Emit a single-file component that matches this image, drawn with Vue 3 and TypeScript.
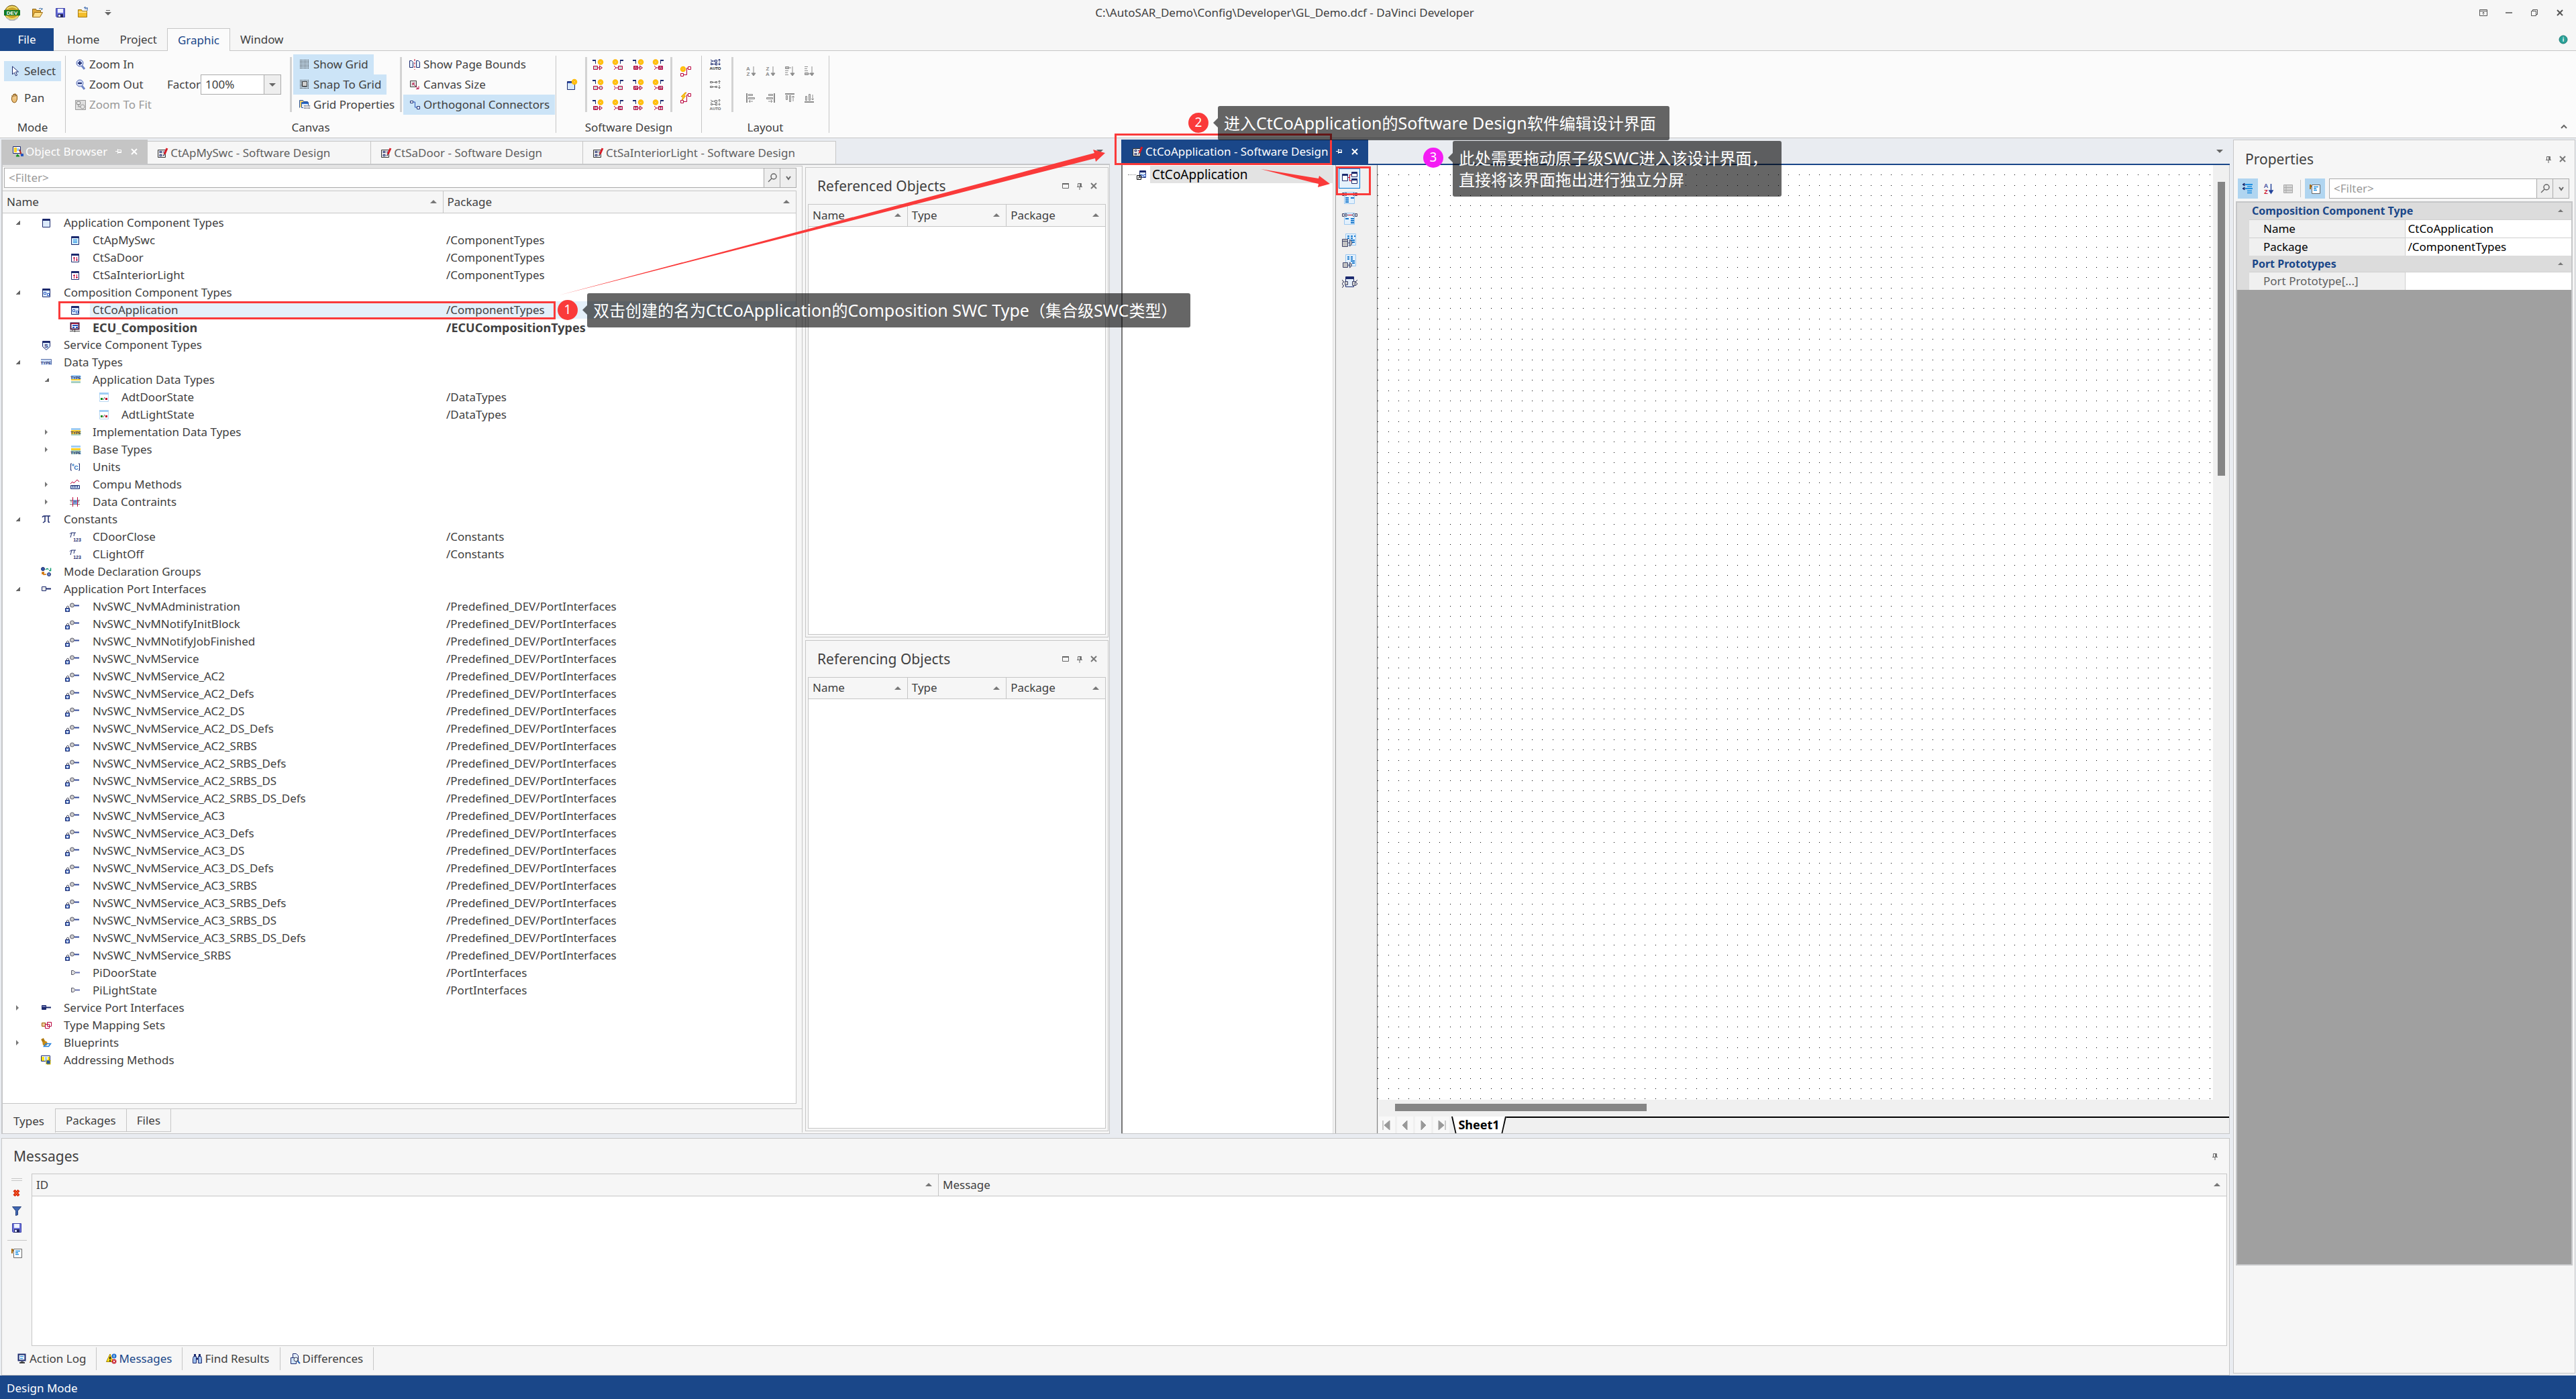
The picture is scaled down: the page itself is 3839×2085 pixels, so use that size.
<script setup lang="ts">
import { h } from 'vue'

const NAVY = '#1c2a6e'
const RED = '#b8003c'
const GREY = '#8c8c8c'

const r = (x: number, y: number, w: number, ht: number, fill: string) =>
  `<rect x="${x}" y="${y}" width="${w}" height="${ht}" fill="${fill}"/>`
const p = (d: string, stroke: string, fill = 'none', w = 1) =>
  `<path d="${d}" stroke="${stroke}" fill="${fill}" stroke-width="${w}"/>`
const t = (x: number, y: number, s: string, fill: string, size = 7) =>
  `<text x="${x}" y="${y}" font-size="${size}" font-weight="700" font-family="Liberation Sans, sans-serif" text-anchor="middle" fill="${fill}">${s}</text>`
const c = (x: number, y: number, rad: number, fill: string, stroke = 'none', w = 1) =>
  `<circle cx="${x}" cy="${y}" r="${rad}" fill="${fill}" stroke="${stroke}" stroke-width="${w}"/>`

const sun = (x: number, y: number) =>
  c(x, y, 3.5, '#ffe21a', '#ffb400', 1.5) + c(x, y, 1.5, '#ffef80', '#ff9000')
const win = (inner = '', body = '#dcebfb') =>
  p('M2.500 2.500h11v12h-11z', NAVY, body) + r(3, 3, 10, 2, NAVY) + inner

const outPort = (letter: string, head: string) =>
  r(0, 1, 5, 2, NAVY) + r(4, 3, 1, 4, NAVY) + sun(12, 4.5) +
  p('M1.500 10.500h6v5h-6z', RED, '#d0d0d0') + p('M7 13h3', RED) +
  (head === 'o' ? c(12.5, 13, 2.5, '#ccc', RED) : p('M10.500 10l4 3-4 3z', RED, '#d0d0d0')) +
  (letter ? t(4.5, 15, letter, RED, 6) : '')
const inPort = (letter: string, tail: string) =>
  sun(4, 4.5) + r(11, 1, 5, 2, NAVY) + r(11, 3, 1, 4, NAVY) +
  p('M8.500 10.500h6v5h-6z', RED, '#d0d0d0') +
  (tail === 'o' ? p('M2 10q4 3 0 6M5 13h3', RED) : p('M2 10l3 3-3 3M5 13h3', RED)) +
  (letter ? t(11.5, 15, letter, RED, 6) : '')

const bars = (mark: number) => {
  const col = ['#9fcdf4', '#ffd028', '#a5cfc0']
  return r(2, 2, 14, 3, col[0]) + r(2, 6, 14, 3, col[1]) + r(2, 10, 14, 3, col[2]) +
    r(2, 1 + mark * 4, 14, 6, col[mark]) + t(9, 7 + mark * 4, 'TYPE', NAVY, 6)
}
const floppy =
  p('M1.500 1.500h13v13h-12l-1-1z', '#3a3fa8', '#6a70d8') + r(4, 2, 8, 6, '#eef2ff') +
  r(4, 10, 8, 5, '#22265e') + r(5, 11, 3, 3, '#dfe3ff')
const arrowDown = (x: number) => p(`M${x} 1v13M${x - 3} 11l3 4 3-4z`, GREY, GREY)
const doc = (x: number, lines: string) =>
  p(`M${x}.500 1.500h15v17h-15z`, '#9cc8f0', '#e2f0fc') + p(lines, '#1677cc', 'none', 2)
const linkTop =
  p('M1.500 2.500h3v4h-3zM6.500 2l3 2.500-3 2.500zM20.500 2.500h3v4h-3zM19 2l-3 2.500 3 2.500', '#404468', '#ddd') +
  r(10, 4, 6, 1, '#d00020')

const icons: Record<string, string> = {
  app: c(12, 12, 11, '#c9a227', '#6a5410') + p('M4 6q8-6 16 0M3 17q9 8 18 0', '#f2da6a', 'none', 2) +
    r(0, 8, 24, 8, '#117a23') + t(12, 15, 'DEV', '#fff', 8) + p('M5 20l4 3h6l5-3', '#bbb', 'none', 2),
  open: p('M.500 14V2.500h5l1 2h6V7', '#8a6414', '#e0a83a') + p('M.500 14.500l3-7h12l-4 7z', '#9c6b10', '#ffdf8a') + p('M10 2q3-2 5 1l-2 0M15 3v-2', '#3b6ea8'),
  save: floppy,
  up: p('M.500 14.500v-11h5l1 2h7v9z', '#a5790f', '#f3bd2c') + r(1, 6, 12, 2, '#ffe38c') + p('M11 1h3v4M11 3V-1l-2 2M13 1l2 0', '#2f5fa8'),
  cursor: p('M3.500 1v12l3-3 2 5 2-1-2-5h4z', NAVY, '#fff'),
  hand: p('M3.500 9V4M5.500 8V2M7.500 8V1.500M9.500 8V3', '#8a5a16', 'none', 2) + p('M2.500 7v4q1 4 4 4t4-5V5', '#8a5a16', '#ecc07a') + p('M4.500 9V4M6.500 9V3M8.500 9V4', '#f2d09a'),
  zin: p('M10 10l4 5', '#6f86c8', 'none', 3) + c(7, 6, 5, '#cfd9f4', '#5b70b8') + p('M4 6h6M7 3v6', NAVY, 'none', 2),
  zout: p('M10 10l4 5', '#6f86c8', 'none', 3) + c(7, 6, 5, '#cfd9f4', '#5b70b8') + p('M4 6h6', NAVY, 'none', 2),
  fit: p('M.500 1.500h15v14h-15z', '#999', '#dedede') + p('M2.500 3.500h5v4h-5z', '#888', '#eee') + c(11, 11, 3, '#e6e6e6', '#999') + p('M5 8v3h3', '#888'),
  grid: [1, 3, 5, 7, 9, 11, 13].map(y => `<path d="M1 ${y}.500h14" stroke="#222" stroke-dasharray="1 1"/>`).join(''),
  snap: [1, 3, 5, 7, 9, 11, 13].map(y => `<path d="M1 ${y}.500h14" stroke="#222" stroke-dasharray="1 1"/>`).join('') + p('M4.500 3.500h7v7h-7z', '#333', '#cfcfcf'),
  gprops: p('M.500 12.500v-11h5l1 2h6v3', '#28549c', '#f6d36c') + p('M3.500 4.500h10v8h-10z', '#28549c', '#eaf3fd') + r(4, 5, 9, 2, '#2f6fd0') + r(6, 9, 10, 6, '#fff') + [9, 11, 13].map(y => `<path d="M7 ${y}.500h9" stroke="#223" stroke-dasharray="1 1"/>`).join(''),
  bounds: p('M.500 2.500h3l2 2v8h-5zM10.500 2.500h3l2 2v8h-5z', NAVY, '#e6f0fb') + `<path d="M8 0v16" stroke="#c00020" stroke-dasharray="3 2"/>`,
  csize: p('M1.500 2.500h9v9h-9z', '#444', '#ddd') + p('M5 6l8 8M5 9V6h3M10 14.500h4v-4', RED),
  ortho: p('M1.500 2.500h4v3h-4zM11.500 10.500h4v4h-4z', NAVY, '#fff') + p('M5 4h3.500v8h3', '#2451b8'),
  newc: p('M1.500 3.500h11v12h-11z', NAVY, '#d6e8fa') + r(2, 4, 8, 2, '#2d4ba8') + sun(12, 4),
  conn: sun(4, 5) + p('M11.500 1.500h4v4h-4zM.500 11.500h4v4h-4z', RED, '#fff') + p('M5 13.500h4.500v-10h2', RED),
  flash: p('M7 0L1 6h3l-2 6 6-7H5l4-5z', '#e89a00', '#ffd21c') + p('M11.500 1.500h4v4h-4zM.500 11.500h4v4h-4z', RED, '#fff') + p('M5 13.500h4.500v-10h2', RED),
  auto1: p('M1 1l3 2-3 2M4 3h3M7.500 1.500h3v3h-3zM1.500 6.500h2v2h-2zM4 7.500h4M8.500 6h2v3h-2zM14 0v4M12.500 2L14 0l1.500 2M14 5v4M12.500 7L14 9l1.500-2', NAVY) + t(8, 16, 'AUTO', '#111', 6),
  auto2: p('M.500 3.500h3v2h-3zM4 4.500h4M8.500 3.500h2v2h-2zM.500 10.500h3v2h-3zM4 11.500h4M8.500 10.500h2v2h-2zM14 2v5M12.500 4L14 2l1.500 2M14 9v5M12.500 12l1.500 2 1.500-2', '#666'),
  auto3: p('M1 1l3 2-3 2M4 3h3M7.500 1.500h3v3h-3zM1.500 6.500h2v2h-2zM4 7.500h4M8.500 6h2v3h-2zM14 0v4M12.500 2L14 0l1.500 2M14 5v4M12.500 7L14 9l1.500-2', '#777') + t(8, 16, 'AUTO', '#666', 6),
  l0: t(4, 7, 'A', GREY, 8) + t(4, 15, 'Z', GREY, 8) + arrowDown(12),
  l1: t(4, 7, 'Z', GREY, 8) + t(4, 15, 'A', GREY, 8) + arrowDown(12),
  l2: p('M1.500 1.500h5v3h-5z', GREY, '#bbb') + p('M7 3h3M1 7.500h5M1 10.500h4M1 13.500h5', GREY) + arrowDown(12),
  l3: p('M1.500 10.500h5v3h-5z', GREY, '#bbb') + p('M7 12h3M1 1.500h5M1 4.500h4M1 7.500h5', GREY) + arrowDown(12),
  l4: p('M2 1v14', GREY, 'none', 2) + p('M4.500 2.500h6v2h-6zM4.500 7.500h9v2h-9zM5 13h6M7 11l-2 2 2 2', GREY, '#ddd'),
  l5: p('M14 1v14', GREY, 'none', 2) + p('M5.500 2.500h6v2h-6zM2.500 7.500h9v2h-9zM5 13h6M9 11l2 2-2 2', GREY, '#ddd'),
  l6: p('M1 2h14', GREY, 'none', 2) + p('M2.500 4.500h2v6h-2zM7.500 4.500h2v9h-2zM13 5v8M11 7l2-2 2 2', GREY, '#ddd'),
  l7: p('M1 14h14', GREY, 'none', 2) + p('M2.500 5.500h2v6h-2zM7.500 2.500h2v9h-2zM13 3v8M11 9l2 2 2-2', GREY, '#ddd'),
  comp: win(),
  swc: win(p('M5 7.500h6M5 9.500h6M5 11.500h6', '#1f8fe0'), '#d8f0ff'),
  sens: win(p('M6.500 13V7M5 8.500h3M10.500 7v6M9 11.500h3', '#c0003a'), '#fff'),
  compo: win(p('M4.500 7.500h3v3h-3zM9.500 9.500h3v3h-3z', '#2456c0', '#fff')),
  ecu: p('M1.500 1.500h12v9h-12z', '#4a1840', '#fff', 2) + r(2, 2, 11, 1, '#d02040') + p('M4 5h8M4 8h3M9 8h3', '#2456c0', 'none', 2) + p('M0 13.500h15M7.500 11v4M3 13.500l2-2', '#444'),
  serv: p('M2.500 2.500h11v8l-5 4.500h-1l-5-4.500z', NAVY, '#dcebfb') + r(3, 3, 10, 2, NAVY) + t(8, 12, 'S', NAVY, 8),
  type: r(0, 3, 15, 9, '#cfe0fa') + p('M0 3.500h15.500v8', '#5a70a8') + t(7.5, 10.5, 'TYPE', NAVY, 6),
  adt: bars(0),
  impl: bars(1),
  base: bars(2),
  state: p('M1.500 2.500h13v12h-13z', '#b9d8f2', '#fff') + r(1, 1, 14, 3, '#9fcdf4') + r(3, 9, 3, 3, '#0a8a1a') + r(10, 9, 3, 3, '#c00028') + p('M7 12l2-4', '#555'),
  unit: p('M3 3H1.500v10H3M13 3h1.500v10H13', NAVY) + c(5, 5, 1.2, 'none', '#1f6fc0') + t(9.5, 12, 'C', '#1f6fc0', 9),
  compu: p('M1 7l3-3 2 2 5-5 3 3', '#c0003a') + p('M1.500 9.500h13v5h-13z', NAVY, '#cfe0fa') + p('M4 10v3M6.500 10v3M9 10v3M11.500 10v3', NAVY),
  constr: p('M0 5.500h15M0 11.500h15', '#777') + r(4, 5, 7, 6, '#7fa8f0') + p('M2 6v3M7 6v3M9 6v3M13 6v3', '#555') + p('M4.500 1v14M11.500 1v14', '#c0003a'),
  pi: p('M2 5q1-2 3-2h9M6 3v8l-3 2M11 3v8q0 2 2 1', NAVY, 'none', 1.5),
  pi123: p('M0 4q1-2 3-2h6M3 2l-2 7M7 2L6 7', NAVY) + t(11, 15, '123', NAVY, 7),
  mode: c(3, 4, 2.5, '#3456a8', NAVY) + c(12, 12, 2.5, '#6a86c8', NAVY) + p('M7 5q3-3 4 0M12 6.500h2.500v-4', '#0a9a70', 'none', 1.5) + p('M8 12H4V9M2 12l0-3 3 0M2 9l3 4', '#d07000', 'none', 1.5),
  port: p('M1.500 4.500h6v6h-6z', NAVY, '#e8e8e8') + p('M8 7.500h7', NAVY, 'none', 2),
  nv: c(3.5, 6, 3, '#ccc', '#556') + p('M7 6.500h7', '#334a9c', 'none', 2) + p('M-4.500 10V8q1.500-2 3 0v2', '#445') + p('M-6.500 10.500h6v5h-6z', NAVY, '#5f86d0') + r(-4, 12, 1, 3, '#fff') + r(-5, 12, 3, 1, '#fff'),
  pport: p('M2.500 4.500h3l3 3-3 3h-3z', '#556', '#ddd') + p('M8 7.500h7', '#6a74b0', 'none', 2),
  sport: p('M1.500 4.500h6v6h-6z', NAVY, NAVY) + r(2, 5, 5, 2, '#6a74b0') + p('M8 7.500h7', NAVY, 'none', 2),
  map: p('M1.500 4.500h5v5h-5zM6.500 4v4', '#a05a00', '#f0d0a0') + p('M9.500 3.500h6v6h-6zM6.500 6.500h6v6h-6z', '#b8003c', '#fff'),
  blue: p('M2 2l3 6', '#b07a10', 'none', 4) + c(6, 9, 3.5, '#c98c14') + p('M4.500 13.500l3-4h7l-3 4z', '#1f7fe0', 'none', 1.5),
  addr: p('M.500 1.500h13v8h-13z', NAVY, '#fff') + r(1, 3, 4, 6, '#ffe21a') + r(6, 3, 3, 6, '#9fcdf4') + r(10, 3, 3, 6, '#ffe21a') + `<rect x="8" y="8" width="6" height="6" fill="#2456a0" stroke="#c8b000" stroke-width="2" stroke-dasharray="1 1"/>`,
  browser: p('M.500.500h11v10h-11z', NAVY, '#fff') + r(2, 2, 4, 7, '#ffd028') + r(6, 3, 4, 4, '#9fcdf4') + p('M7 12l-2 3h5z', '#109020', '#109020') + p('M10 5l3 8', '#b02020', 'none', 2) + r(12, 11, 4, 4, '#2456c0'),
  design: p('M.500 3.500h11v11h-11z', '#333', '#e8e8e8') + p('M3 5.500h3v2h-3zM3 10.500h3v2h-3zM8 6.500h2M8 11.500h2', NAVY) + p('M14 1L10 10', '#d81824', 'none', 3) + p('M9 12l1-3', '#444'),
  link: p('M5.500 2.500h9v10h-9z', NAVY, '#dcebfb') + r(6, 3, 8, 2, NAVY) + p('M6.500 8.500h3v2h-3zM11.500 8.500h3v3h-3z', '#2456c0', '#fff') + p('M1.500 9.500h6v6h-6z', '#000', '#fff') + p('M3 14l3-3M4 11h2v2', '#000'),
  tb0: p('M1.500 5.500h8v10h-8z', NAVY, '#fff') + r(2, 6, 7, 2, NAVY) + p('M15.500 2.500h8v7h-8zM15.500 12.500h8v7h-8z', NAVY, '#fff') + r(16, 3, 7, 2, NAVY) + r(16, 13, 7, 2, NAVY) + p('M10 10.500h3M12.500 6v10M12 6.500h3M12 15.500h3', '#d00020'),
  tb1: doc(4, 'M6 10h5M14 10h5M6 13h5M6 16h5') + linkTop,
  tb2: doc(4, 'M6 10h5M14 10h5M14 13h5M14 16h5') + linkTop,
  tb3: doc(6, 'M9 5h3M14 5h3M19 5h2M9 8h3M14 8h3M14 11h6M16 14h4') + p('M1.500 9.500h8v11h-8z', '#404468', '#c4c4c4') + p('M1 12.500h9M10 15h3M12.500 10q7 5 0 10z', '#404468', '#c4c4c4'),
  tb4: doc(6, 'M9 5h3M14 5h3M9 8h3M14 8h3M14 11h6M16 14h4') + p('M2.500 13.500h7v7h-7zM10 17h2M12.500 13q6 4 0 8z', '#404468', '#c4c4c4'),
  tb5: p('M6.500 3.500h12v15h-12z', NAVY, '#e4eefa') + r(7, 4, 11, 3, NAVY) + p('M1 8l3 3-3 3 3 3-3 3M24 8l-3 3 3 3-3 3M5.500 10.500h4v5h-4zM16.500 10.500h4v6h-4z', '#404468', '#ccc'),
  del: p('M4 4l7 8M11 4L4 12', '#d82000', 'none', 4) + p('M5 5l5 6M10 5l-5 6', '#ff8a4a'),
  funnel: p('M1.500 2.500h13l-5 6v6l-3 1v-7z', '#27417e', '#3f66b0'),
  desc: p('M1 2v7M1 3l3 3', '#a86a10', 'none', 2) + p('M3.500 2.500h12v13h-12z', '#666', '#fff') + p('M6 5.500h7M6 8h4M6 10.500h5', '#1f8fe0', 'none', 1.5),
  log: p('M2.500 1.500h10v9h-10z', NAVY, '#e4eefa', 2) + p('M5 4.500h5M5 7.500h4', '#1f8fe0') + p('M6 13h4M4 14h8', '#444', 'none', 2),
  warn: p('M6 1L.500 12.500h10z', '#a08000', '#ffe21a') + p('M6 5v4M6 10v2', '#222', 'none', 2) + c(12, 4, 3.5, '#1f6fd0') + r(11.5, 2, 1, 4, '#fff') + c(12, 12, 3.5, '#c82838') + p('M10.500 10.500l3 3M13.500 10.500l-3 3', '#fff'),
  find: p('M2.500 4.500h4v10h-5v-7zM9.500 4.500h4l1 3v7h-5z', NAVY, '#9fc0ee') + p('M3 2.500h3M10 2.500h3M7 8h2', NAVY, 'none', 3),
  diff: p('M4.500.500h5l3 3v8h-8z', NAVY, '#e4eefa') + p('M1.500 6.500h8v9h-8z', NAVY, '#cfe4fb') + p('M11 11l4 4', '#1f5fb0', 'none', 2) + c(9, 9, 3, '#e8f4ff', '#445'),
  cat: p('M4 2h11M4 8h11', '#1f8fe0', 'none', 2) + p('M7 5h7M7 11.500h7M7 14.500h7', '#1f8fe0', 'none', 1.5) + p('M3 0v4l-3-2zM3 6v4L0 8z', NAVY, NAVY),
  az: t(5, 7, 'A', '#3a4a9c', 9) + t(5, 16, 'Z', '#c8102e', 9) + p('M12.500 1v13M10 11l2.500 4 2.500-4z', '#24459c', '#24459c', 1.5),
  pages: p('M1.500 2.500h13v12h-13zM5 3v12M2 6.500h12M2 10.500h12', '#aaa', '#d4d4d4'),
  pin: p('M5.500 4.500h5v5M5.500 4.500v5M4 9.500h8M8 10v4', '#666') + r(8, 5, 3, 5, '#777'),
  pinside: p('M6.500 5.500h5v4h-5M6.500 4v7M3 7.500h3', 'currentColor') + r(7, 8, 5, 2, 'currentColor'),
  x: p('M4 4l8 8M12 4l-8 8', 'currentColor', 'none', 2),
  rest: p('M3.500 4.500h9v7h-9z', '#666') + r(3, 4, 10, 2, '#666'),
  mag: c(10, 6, 4, 'none', '#666', 1.5) + p('M7 9l-5 5', '#666', 'none', 1.5),
  chev: p('M5 6l3 4 3-4', '#666', 'none', 2),
  chevup: p('M4 10l4-4 4 4', '#666', 'none', 2),
  min: p('M3 8h10', '#555', 'none', 1.5),
  max: p('M3.500 5.500h7v7h-7zM5.500 5v-1.500h7v7H11', '#555'),
  ribbon: p('M2.500 3.500h11v9h-11zM2 5.500h12M8 11V7M6.500 8.500L8 7l1.500 1.500', '#555'),
  help: c(8, 8, 6, '#2aa198', '#1b7a74') + t(8, 11, 'i', '#fff', 9),
}
;['|', '|o', 'M', 'Nv', 'C', 'T'].forEach(k => {
  const letter = k[0] === '|' ? '' : k
  icons['out' + k] = outPort(letter, k === '|o' ? 'o' : '')
  icons['in' + k] = inPort(letter, k === '|o' ? 'o' : '')
})

const sizes: Record<string, number> = { app: 24, tb0: 24, tb1: 24, tb2: 24, tb3: 24, tb4: 24, tb5: 24 }
const Ico = (props: { n: string }) => {
  const s = sizes[props.n] ?? 16
  return h('svg', { class: 'ico', width: s, height: s, viewBox: `0 0 ${s} ${s}`, 'aria-hidden': 'true', innerHTML: icons[props.n] })
}
Ico.props = ['n']

const portIcons = ['out|', 'in|', 'outM', 'inM', 'out|o', 'in|o', 'outNv', 'inNv', 'outC', 'inC', 'outT', 'inT']
const docTabs = ['CtApMySwc - Software Design', 'CtSaDoor - Software Design', 'CtSaInteriorLight - Software Design']
const viewTools = ['tb1', 'tb2', 'tb3', 'tb4', 'tb5']
const navButtons = ['M6 5v14M16 5v14l-8-7z', 'M15 5v14l-7-7z', 'M9 5v14l7-7z', 'M8 5v14l8-7zM18 5v14']
const refPanels = ['Referenced Objects', 'Referencing Objects']
const messageTabs = [
  { icon: 'log', label: 'Action Log' },
  { icon: 'warn', label: 'Messages' },
  { icon: 'find', label: 'Find Results' },
  { icon: 'diff', label: 'Differences' },
]

interface Row { level: number; icon: string; name: string; pkg?: string; open?: boolean; bold?: boolean; selected?: boolean }
const n = (level: number, icon: string, name: string, pkg?: string, open?: boolean): Row => ({ level, icon, name, pkg, open })
const nvm = ['Administration', 'NotifyInitBlock', 'NotifyJobFinished', 'Service',
  'Service_AC2', 'Service_AC2_Defs', 'Service_AC2_DS', 'Service_AC2_DS_Defs', 'Service_AC2_SRBS',
  'Service_AC2_SRBS_Defs', 'Service_AC2_SRBS_DS', 'Service_AC2_SRBS_DS_Defs',
  'Service_AC3', 'Service_AC3_Defs', 'Service_AC3_DS', 'Service_AC3_DS_Defs', 'Service_AC3_SRBS',
  'Service_AC3_SRBS_Defs', 'Service_AC3_SRBS_DS', 'Service_AC3_SRBS_DS_Defs', 'Service_SRBS']

const rows: Row[] = [
  n(0, 'comp', 'Application Component Types', '', true),
  n(1, 'swc', 'CtApMySwc', '/ComponentTypes'),
  n(1, 'sens', 'CtSaDoor', '/ComponentTypes'),
  n(1, 'sens', 'CtSaInteriorLight', '/ComponentTypes'),
  n(0, 'compo', 'Composition Component Types', '', true),
  { level: 1, icon: 'compo', name: 'CtCoApplication', pkg: '/ComponentTypes', selected: true },
  { level: 1, icon: 'ecu', name: 'ECU_Composition', pkg: '/ECUCompositionTypes', bold: true },
  n(0, 'serv', 'Service Component Types'),
  n(0, 'type', 'Data Types', '', true),
  n(1, 'adt', 'Application Data Types', '', true),
  n(2, 'state', 'AdtDoorState', '/DataTypes'),
  n(2, 'state', 'AdtLightState', '/DataTypes'),
  n(1, 'impl', 'Implementation Data Types', '', false),
  n(1, 'base', 'Base Types', '', false),
  n(1, 'unit', 'Units'),
  n(1, 'compu', 'Compu Methods', '', false),
  n(1, 'constr', 'Data Contraints', '', false),
  n(0, 'pi', 'Constants', '', true),
  n(1, 'pi123', 'CDoorClose', '/Constants'),
  n(1, 'pi123', 'CLightOff', '/Constants'),
  n(0, 'mode', 'Mode Declaration Groups'),
  n(0, 'port', 'Application Port Interfaces', '', true),
  ...nvm.map(s => n(1, 'nv', 'NvSWC_NvM' + s, '/Predefined_DEV/PortInterfaces')),
  n(1, 'pport', 'PiDoorState', '/PortInterfaces'),
  n(1, 'pport', 'PiLightState', '/PortInterfaces'),
  n(0, 'sport', 'Service Port Interfaces', '', false),
  n(0, 'map', 'Type Mapping Sets'),
  n(0, 'blue', 'Blueprints', '', false),
  n(0, 'addr', 'Addressing Methods'),
]

// Grid dots repeat every 15.3 px, so ten of them fill a 153 px tile.
const steps = [0, 16, 31, 46, 62, 77, 92, 108, 123, 138]
const dots = steps.flatMap(y => steps.map(x => `M${x} ${y}h1v1h-1z`)).join('')
</script>

<template>
  <div class="app">
    <header class="titlebar">
      <div class="quick">
        <Ico n="app" />
        <button class="plain" aria-label="Open"><Ico n="open" /></button>
        <button class="plain" aria-label="Save"><Ico n="save" /></button>
        <button class="plain" aria-label="Close workspace"><Ico n="up" /></button>
        <button class="plain more" aria-label="Customize"><i class="bar"></i><i class="tri down"></i></button>
      </div>
      <h1>C:\AutoSAR_Demo\Config\Developer\GL_Demo.dcf - DaVinci Developer</h1>
      <div class="winbtns">
        <button class="plain" aria-label="Ribbon options"><Ico n="ribbon" /></button>
        <button class="plain" aria-label="Minimize"><Ico n="min" /></button>
        <button class="plain" aria-label="Restore"><Ico n="max" /></button>
        <button class="plain" aria-label="Close"><Ico n="x" /></button>
      </div>
    </header>

    <nav class="menu">
      <button class="file">File</button>
      <button>Home</button>
      <button>Project</button>
      <button class="on">Graphic</button>
      <button>Window</button>
      <span class="fill"></span>
      <button class="help" aria-label="Help"><Ico n="help" /></button>
    </nav>

    <section class="ribbon">
      <div class="group mode">
        <div class="cols">
          <div class="col two">
            <button class="cmd on"><Ico n="cursor" />Select</button>
            <button class="cmd"><Ico n="hand" />Pan</button>
          </div>
        </div>
        <p>Mode</p>
      </div>
      <i class="gsep"></i>
      <div class="group canvasg">
        <div class="cols">
          <div class="col a">
            <button class="cmd"><Ico n="zin" />Zoom In</button>
            <button class="cmd"><Ico n="zout" />Zoom Out</button>
            <button class="cmd off" disabled><Ico n="fit" />Zoom To Fit</button>
          </div>
          <div class="factor">
            <label for="factor">Factor</label>
            <span class="combo">
              <select id="factor"><option>100%</option></select>
              <i class="drop"><i class="tri down"></i></i>
            </span>
          </div>
          <i class="tsep"></i>
          <div class="col b">
            <button class="cmd on"><Ico n="grid" />Show Grid</button>
            <button class="cmd on"><Ico n="snap" />Snap To Grid</button>
            <button class="cmd"><Ico n="gprops" />Grid Properties</button>
          </div>
          <i class="tsep"></i>
          <div class="col c">
            <button class="cmd"><Ico n="bounds" />Show Page Bounds</button>
            <button class="cmd"><Ico n="csize" />Canvas Size</button>
            <button class="cmd on"><Ico n="ortho" />Orthogonal Connectors</button>
          </div>
        </div>
        <p>Canvas</p>
      </div>
      <i class="gsep"></i>
      <div class="group soft">
        <div class="cols">
          <div class="one"><button class="cell" aria-label="New component"><Ico n="newc" /></button></div>
          <i class="tsep"></i>
          <div class="ports">
            <button v-for="k in portIcons" :key="k" class="cell" aria-label="New port"><Ico :n="k" /></button>
          </div>
          <i class="tsep"></i>
          <div class="stack">
            <button class="cell tall" aria-label="New connector"><Ico n="conn" /></button>
            <button class="cell tall" aria-label="Auto connect"><Ico n="flash" /></button>
          </div>
        </div>
        <p>Software Design</p>
      </div>
      <i class="gsep"></i>
      <div class="group lay">
        <div class="cols">
          <div class="stack">
            <button v-for="k in 3" :key="k" class="cell" aria-label="Arrange"><Ico :n="'auto' + k" /></button>
          </div>
          <i class="tsep"></i>
          <div class="aligns">
            <button v-for="k in 8" :key="k" class="cell tall" aria-label="Align"><Ico :n="'l' + (k - 1)" /></button>
          </div>
        </div>
        <p>Layout</p>
      </div>
      <i class="gsep"></i>
      <span class="fill"></span>
      <button class="plain collapse" aria-label="Collapse ribbon"><Ico n="chevup" /></button>
    </section>

    <main>
      <div class="left">
        <div class="docks">
          <section class="dock">
            <div class="tabs">
              <button class="tab cur"><Ico n="browser" />Object Browser<Ico n="pinside" class="gap" /><Ico n="x" /></button>
              <button v-for="d in docTabs" :key="d" class="tab"><Ico n="design" />{{ d }}</button>
              <span class="fill"></span>
              <i class="tri down big"></i>
            </div>
            <div class="dockbody">
              <div class="browser">
                <div class="filter">
                  <input type="text" placeholder="<Filter>" aria-label="Filter objects" />
                  <button aria-label="Search"><Ico n="mag" /></button>
                  <button aria-label="Options"><Ico n="chev" /></button>
                </div>
                <div class="tablebox">
                  <table class="tree">
                    <colgroup><col class="wide" /><col /></colgroup>
                    <thead>
                      <tr>
                        <th><span>Name<i class="tri up"></i></span></th>
                        <th><span>Package<i class="tri up"></i></span></th>
                      </tr>
                    </thead>
                    <tbody>
                      <tr v-for="row in rows" :key="row.name" :class="{ bold: row.bold, sel: row.selected }">
                        <td>
                          <div class="node" :class="'lv' + row.level">
                            <span class="tw"><i v-if="row.open === true" class="tw-open"></i><i v-else-if="row.open === false" class="tw-shut"></i></span>
                            <Ico :n="row.icon" />
                            <span class="nm">{{ row.name }}</span>
                          </div>
                        </td>
                        <td class="pkg">{{ row.pkg }}</td>
                      </tr>
                    </tbody>
                  </table>
                </div>
                <div class="btabs">
                  <button class="cur">Types</button><button>Packages</button><button>Files</button><span class="fill"></span>
                </div>
              </div>
              <div class="refs">
                <section v-for="(title, i) in refPanels" :key="title" class="ref" :class="'ref' + i">
                  <div class="phead">
                    <h2>{{ title }}</h2>
                    <button class="plain" aria-label="Maximize"><Ico n="rest" /></button>
                    <button class="plain" aria-label="Pin"><Ico n="pin" /></button>
                    <button class="plain" aria-label="Close"><Ico n="x" /></button>
                  </div>
                  <div class="tablebox">
                    <table>
                      <thead>
                        <tr>
                          <th><span>Name<i class="tri up"></i></span></th>
                          <th><span>Type<i class="tri up"></i></span></th>
                          <th><span>Package<i class="tri up"></i></span></th>
                        </tr>
                      </thead>
                    </table>
                  </div>
                </section>
              </div>
            </div>
          </section>

          <section class="design">
            <div class="tabs blue">
              <button class="tab act"><Ico n="design" />CtCoApplication - Software Design<Ico n="pinside" class="gap" /><Ico n="x" /></button>
              <span class="fill"></span>
              <i class="tri down big"></i>
            </div>
            <div class="dbody">
              <div class="outline">
                <div class="oitem"><i class="dotline"></i><Ico n="link" /><span>CtCoApplication</span></div>
              </div>
              <div class="tools">
                <button class="tool on" aria-label="Graphical view"><Ico n="tb0" /></button>
                <button v-for="k in viewTools" :key="k" class="tool" aria-label="View"><Ico :n="k" /></button>
              </div>
              <div class="sheet">
                <div class="crow">
                  <svg class="canvas" width="100%" height="100%" aria-hidden="true">
                    <defs>
                      <pattern id="dots" width="153" height="153" y="14" patternUnits="userSpaceOnUse"><path :d="dots" fill="#000" /></pattern>
                    </defs>
                    <rect width="100%" height="100%" fill="url(#dots)" />
                  </svg>
                  <div class="vbar"><i></i></div>
                </div>
                <div class="hbar"><i></i></div>
                <div class="stabs">
                  <button v-for="d in navButtons" :key="d" class="nav" aria-label="Sheet navigation">
                    <svg width="24" height="24" viewBox="0 0 24 24"><path :d="d" fill="#999" stroke="#999" /></svg>
                  </button>
                  <button class="stab"><span>Sheet1</span></button>
                  <span class="fill line"></span>
                </div>
              </div>
            </div>
          </section>
        </div>

        <section class="messages">
          <div class="phead">
            <h2>Messages</h2>
            <button class="plain" aria-label="Pin"><Ico n="pin" /></button>
          </div>
          <div class="mbody">
            <div class="mtools">
              <i class="grip"></i>
              <button class="plain" aria-label="Delete"><Ico n="del" /></button>
              <button class="plain" aria-label="Filter"><Ico n="funnel" /></button>
              <button class="plain" aria-label="Save"><Ico n="save" /></button>
              <i class="rule"></i>
              <button class="plain" aria-label="Details"><Ico n="desc" /></button>
            </div>
            <div class="tablebox">
              <table>
                <colgroup><col class="idcol" /><col /></colgroup>
                <thead>
                  <tr>
                    <th><span>ID<i class="tri up"></i></span></th>
                    <th><span>Message<i class="tri up"></i></span></th>
                  </tr>
                </thead>
              </table>
            </div>
          </div>
          <div class="mtabs">
            <button v-for="m in messageTabs" :key="m.label" :class="{ cur: m.label === 'Messages' }"><Ico :n="m.icon" />{{ m.label }}</button>
          </div>
        </section>
      </div>

      <aside class="props">
        <div class="phead">
          <h2>Properties</h2>
          <button class="plain" aria-label="Pin"><Ico n="pin" /></button>
          <button class="plain" aria-label="Close"><Ico n="x" /></button>
        </div>
        <div class="ptools">
          <button class="pt on" aria-label="Categorized"><Ico n="cat" /></button>
          <button class="pt" aria-label="Alphabetical"><Ico n="az" /></button>
          <button class="pt" aria-label="Property pages"><Ico n="pages" /></button>
          <i class="psep"></i>
          <button class="pt on" aria-label="Description"><Ico n="desc" /></button>
          <div class="filter">
            <input type="text" placeholder="<Filter>" aria-label="Filter properties" />
            <button aria-label="Search"><Ico n="mag" /></button>
            <button aria-label="Options"><Ico n="chev" /></button>
          </div>
        </div>
        <div class="pgrid">
          <table>
            <colgroup><col class="c-ind" /><col class="c-key" /><col /></colgroup>
            <tbody>
              <tr><th colspan="3"><span>Composition Component Type<i class="tri up"></i></span></th></tr>
              <tr><td class="ind"></td><td class="key">Name</td><td class="val">CtCoApplication</td></tr>
              <tr><td class="ind"></td><td class="key">Package</td><td class="val">/ComponentTypes</td></tr>
              <tr><th colspan="3"><span>Port Prototypes<i class="tri up"></i></span></th></tr>
              <tr><td class="ind"></td><td class="key dim">Port Prototype[...]</td><td class="val"></td></tr>
            </tbody>
          </table>
        </div>
      </aside>
    </main>

    <footer>Design Mode</footer>

    <div class="notes">
      <svg width="100%" height="100%" aria-hidden="true">
        <path d="M833 440L1631 228l-2-5 18 5-14 13-1-5z" fill="#fa3a3a" />
        <path d="M1879 252l86 14 1-4 16 12-18 5 1-5-9-2z" fill="#fa3a3a" />
      </svg>
      <i class="box box1"></i>
      <i class="box box2"></i>
      <i class="box box3"></i>
      <b class="num num1">1</b>
      <p class="tip tip1">双击创建的名为<span>CtCoApplication</span>的<span>Composition SWC Type</span>（集合级<span>SWC</span>类型）</p>
      <b class="num num2">2</b>
      <p class="tip tip2">进入<span>CtCoApplication</span>的<span>Software Design</span>软件编辑设计界面</p>
      <b class="num num3">3</b>
      <p class="tip tip3">此处需要拖动原子级<span>SWC</span>进入该设计界面，<br />直接将该界面拖出进行独立分屏</p>
    </div>
  </div>
</template>

<style>
html, body { margin: 0; height: 100%; }
</style>

<style scoped>
.app {
  position: relative; display: flex; flex-direction: column; height: 100vh; overflow: hidden;
  background: #f6f6f6; color: #404040;
  font: 17px/26px "Noto Sans", "Noto Sans CJK SC", sans-serif;
}
.app *, .app *::before { box-sizing: border-box; }
button, input, select { font: inherit; color: inherit; margin: 0; padding: 0; border: 0; background: none; border-radius: 0; white-space: nowrap; }
h1, h2, p { margin: 0; font-weight: 400; }
h1 { font-size: 17px; }
h2 { font-size: 21px; }
.fill { flex: 1; }
.ico { flex: none; display: block; overflow: visible; }
.plain { display: flex; align-items: center; }
.tri { display: block; flex: none; width: 0; height: 0; border: 5px solid transparent; }
.tri.down { border-top-color: #666; border-bottom: 0; }
.tri.up { border-bottom-color: #777; border-top: 0; }
.tri.big { margin: 0 10px 0 0; align-self: center; }

.titlebar { display: flex; align-items: center; height: 42px; padding: 0 16px 4px 6px; }
.quick, .winbtns { display: flex; align-items: center; flex: 1; }
.quick .plain { margin-left: 18px; }
.quick .more { flex-direction: column; gap: 2px; margin-left: 24px; }
.bar { width: 6px; height: 1px; background: #666; }
.winbtns { justify-content: flex-end; gap: 22px; color: #555; }

.menu { display: flex; height: 34px; flex: none; border-bottom: 1px solid #c6c6c6; }
.menu button { height: 33px; padding: 0 15px; }
.menu .file { width: 80px; height: 34px; margin-right: 5px; background: #1a4789; color: #fff; }
.menu .on { height: 34px; border: 1px solid #c6c6c6; border-bottom: 0; background: #fbfbfb; color: #1a4789; }
.menu .help { padding: 0 11px; }

.ribbon { display: flex; flex: none; height: 130px; background: #fbfbfb; border-bottom: 1px solid #c6c6c6; }
.group { display: flex; flex-direction: column; padding-top: 5px; }
.group p { margin-top: 4px; line-height: 30px; text-align: center; }
.cols { display: flex; height: 90px; }
.gsep { width: 1px; margin: 7px 0; background: #c6c6c6; }
.tsep { width: 3px; margin: 4px 0; background: #d3d3d3; }
.col { display: flex; flex-direction: column; align-items: flex-start; }
.two { justify-content: center; gap: 10px; }
.cmd { display: flex; align-items: center; gap: 5px; height: 30px; padding: 0 8px 0 9px; }
.cmd.on { background: #cce4f7; }
.cmd.off { color: #999; }
.mode { width: 97px; }
.mode .cols { padding-left: 6px; }
.canvasg { width: 730px; }
.canvasg .cols { padding-left: 5px; }
.col.a { width: 146px; }
.col.b { width: 161px; padding-left: 2px; }
.col.c { padding-left: 2px; }
.factor { display: flex; align-items: center; justify-content: space-between; width: 183px; padding-right: 13px; }
.combo { display: flex; width: 120px; height: 30px; border: 1px solid #ababab; background: #fff; }
.combo select { appearance: none; flex: 1; padding-left: 6px; line-height: 26px; }
.drop { display: flex; align-items: center; justify-content: center; width: 25px; border-left: 1px solid #ababab; background: #eee; }
.cell { display: flex; align-items: center; justify-content: center; width: 30px; height: 30px; }
.cell.tall { height: 40px; }
.soft { width: 216px; }
.one { display: flex; align-items: center; width: 44px; padding-left: 8px; }
.ports { display: grid; grid-template-columns: repeat(4, 30px); width: 125px; padding-left: 1px; }
.stack { display: flex; flex-direction: column; justify-content: center; width: 44px; padding-left: 5px; }
.lay { width: 189px; }
.aligns { display: grid; grid-template-columns: repeat(4, 29px); align-content: center; padding-left: 11px; }
.collapse { align-self: flex-end; padding: 8px 10px; }

main { display: flex; flex: 1; min-height: 0; background: #e9ecf1; }
.left { display: flex; flex-direction: column; flex: 1; min-width: 0; padding-left: 2px; }
.docks { display: flex; flex: 1; gap: 17px; min-height: 0; }
.dock, .design { display: flex; flex-direction: column; flex: 1 1 0; min-width: 0; }
.tabs { display: flex; align-items: flex-end; height: 40px; flex: none; border-bottom: 2px solid #c5c6c8; }
.tabs.blue { border-color: #1a4789; }
.tab { display: flex; align-items: center; gap: 3px; height: 34px; padding: 0 60px 0 15px; border: 1px solid #c6c6c6; border-left: 0; border-bottom: 0; background: #f6f6f6; color: #606060; }
.tab.cur, .tab.act { height: 36px; padding: 0 12px 0 17px; border: 0; background: #c5c5c5; color: #fff; }
.tab.act { background: #1a4789; }
.gap { margin: 0 4px 0 6px; }

.dockbody { display: flex; flex: 1; min-height: 0; border: 1px solid #c5c6c8; border-left-width: 2px; border-top: 0; background: #f6f6f6; }
.browser { display: flex; flex-direction: column; flex: 1; min-width: 0; margin: 1px 4px 1px 0; border: solid #c6c6c6; border-width: 1px 1px 0 0; }
.filter { display: flex; height: 30px; margin: 2px 8px 4px 2px; border: 1px solid #ababab; background: #fff; }
.filter input { flex: 1; min-width: 0; padding-left: 6px; outline: 0; }
.filter input::placeholder { color: #999; opacity: 1; }
.filter button { display: flex; align-items: center; justify-content: center; width: 24px; border-left: 1px solid #ababab; background: #eee; }
.tablebox { flex: 1; min-height: 0; margin-right: 8px; overflow: hidden; border: 1px solid #c6c6c6; background: #fff; }
.browser .tablebox { border-left: 0; }
table { width: 100%; border-collapse: collapse; table-layout: fixed; }
th { height: 32px; padding: 0; border-right: 1px solid #c6c6c6; border-bottom: 1px solid #c6c6c6; background: #f6f6f6; font-weight: 400; text-align: left; }
th:last-child { border-right: 0; }
th span { display: flex; align-items: center; justify-content: space-between; padding: 0 9px 0 6px; }
.wide { width: 55.5%; }
td { height: 26px; padding: 0; line-height: 26px; white-space: nowrap; }
.tree tbody::before { content: ""; display: block; height: 1px; }
.node { display: flex; align-items: center; height: 26px; }
.lv1 { padding-left: 43px; }
.lv2 { padding-left: 86px; }
.tw { width: 57px; padding-left: 20px; }
.tw-open { display: block; width: 6px; height: 6px; background: linear-gradient(135deg, transparent 50%, #666 50%); }
.tw-shut { display: block; width: 0; height: 0; border: 4px solid transparent; border-left-color: #777; border-right: 0; }
.nm { flex: 1; margin-left: 14px; padding-left: 4px; }
.pkg { padding-left: 5px; }
.sel .nm, .sel .pkg { background: #e4f0fa; }
.bold { font-size: 18px; font-weight: 700; }
.btabs { display: flex; height: 36px; margin-top: 7px; flex: none; }
.btabs button { height: 35px; padding: 0 15px; border: 1px solid #c6c6c6; border-left: 0; }
.btabs .cur { height: 36px; border: 0; border-right: 1px solid #c6c6c6; padding: 1px 16px 0; }
.btabs .fill { border-top: 1px solid #c6c6c6; }

.refs { display: flex; flex-direction: column; gap: 4px; width: 452px; margin: 3px 1px 3px 0; }
.ref { display: flex; flex-direction: column; border: 1px solid #c6c6c6; padding: 0 3px 3px; }
.ref0 { flex: 700 1 0; }
.ref1 { flex: 732 1 0; }
.ref .tablebox { margin: 0; }
.phead { display: flex; align-items: center; gap: 5px; height: 55px; flex: none; padding: 0 14px; color: #404040; }
.phead h2 { flex: 1; }
.phead .plain { color: #777; }
.ref .phead { height: 54px; padding-right: 10px; }
.ref th { width: 33%; }
.ref th span { line-height: 24px; }

.dbody { display: flex; flex: 1; min-height: 0; border-bottom: 1px solid #c5c6c8; border-right: 1px solid #c5c6c8; background: #f0f0f0; }
.outline { flex: 0 0 316px; border-left: 2px solid #777; border-right: 1px solid #e0e0e0; background: #fff; }
.oitem { display: flex; align-items: center; height: 28px; padding: 0 0 0 8px; color: #000; font-size: 19px; }
.oitem span { flex: 1; margin-left: 5px; padding-left: 3px; background: #e3e3e3; }
.dotline { width: 12px; border-top: 1px dotted #888; }
.tools { display: flex; flex-direction: column; gap: 1px; width: 62px; margin-left: 3px; padding: 5px 0 0 4px; border-left: 1px solid #a0a0a0; }
.tool { display: flex; align-items: center; justify-content: center; width: 32px; height: 30px; }
.tool.on { border: 1px solid #0078d7; background: #e5f1fb; }
.sheet { display: flex; flex-direction: column; flex: 1; min-width: 0; border-left: 1px solid #777; }
.crow { display: flex; flex: 1; min-height: 0; }
.canvas { flex: 1; min-width: 0; background: #fff; }
.vbar { width: 24px; padding: 25px 6px 0 7px; }
.vbar i { display: block; height: 32%; background: #858585; }
.hbar { height: 25px; padding: 6px 0 0 26px; }
.hbar i { display: block; width: 375px; height: 11px; background: #858585; }
.stabs { display: flex; gap: 3px; height: 25px; padding-left: 2px; }
.nav { width: 24px; background: #f8f8f8; }
.nav svg { display: block; }
.stab { display: flex; width: 82px; padding: 0 2px; background: #000; clip-path: polygon(0 0, 100% 0, 93% 100%, 7% 100%); color: #000; font-size: 18px; font-weight: 700; }
.stab span { flex: 1; background: #fff; clip-path: polygon(0 0, 100% 0, 93% 100%, 7% 100%); line-height: 25px; }
.line { margin-left: -3px; border-top: 2px solid #000; }

.messages { display: flex; flex-direction: column; height: 354px; flex: none; margin-top: 6px; border: 1px solid #c6c6c6; background: #f6f6f6; }
.messages .phead { height: 52px; padding: 0 13px 0 17px; }
.mbody { display: flex; flex: 1; min-height: 0; }
.mtools { display: flex; flex-direction: column; align-items: center; width: 44px; padding-top: 7px; gap: 10px; }
.grip { width: 16px; height: 4px; border: solid #c6c6c6; border-width: 1px 0; }
.rule { width: 29px; height: 1px; background: #c6c6c6; }
.messages .tablebox { margin-right: 3px; }
.messages th span { line-height: 24px; }
.idcol { width: 41.3%; }
.mtabs { display: flex; height: 43px; padding: 2px 0 7px 8px; }
.mtabs button { display: flex; align-items: center; gap: 3px; padding: 0 15px 0 14px; border-right: 1px solid #c6c6c6; }
.mtabs .cur { color: #1a4789; }

.props { display: flex; flex-direction: column; width: 510px; margin: 2px 1px 3px 5px; border: 1px solid #c6c6c6; background: #f6f6f6; }
.props .phead { padding: 0 10px 0 17px; }
.ptools { display: flex; height: 34px; padding: 0 4px 4px 6px; margin-top: 2px; }
.pt { display: flex; align-items: center; justify-content: center; width: 30px; height: 30px; }
.pt.on { background: #b0d5f0; }
.psep { width: 1px; height: 26px; margin: 2px 6px 2px 3px; background: #c6c6c6; }
.ptools .filter { flex: 1; margin: 0 4px 0 6px; }
.pgrid { flex: 1; margin: 0 3px 160px; border: 2px solid #c5c6c8; background: #a0a0a0; color: #000; }
.pgrid table { background: #fff; }
.pgrid th { height: 25px; border: 0; background: #dcdcdc; color: #1a4789; font-size: 16px; font-weight: 700; }
.pgrid th span { padding: 0 12px 0 22px; line-height: 24px; }
.pgrid th .tri { border-width: 0 4px 4px; }
.pgrid td { height: 26px; border-top: 1px solid #d0d0d0; }
.pgrid .ind { border: 0; background: #dcdcdc; }
.pgrid .key { padding-left: 21px; border-right: 1px solid #d0d0d0; background: #f0f0f0; }
.pgrid .val { padding-left: 4px; }
.pgrid .dim { color: #606060; }
.c-ind { width: 18px; }
.c-key { width: 232px; }

footer { flex: none; height: 35px; padding: 6px 10px 3px; background: #1a4789; color: #fff; }

.notes { position: absolute; inset: 0; pointer-events: none; }
.notes > svg { display: block; }
.box, .num, .tip { position: absolute; }
.box { border: 3px solid #fa3a3a; }
.box1 { left: 87px; top: 449px; width: 741px; height: 27px; }
.box2 { left: 1661px; top: 199px; width: 324px; height: 47px; }
.box3 { left: 1991px; top: 248px; width: 52px; height: 43px; }
.num { width: 30px; height: 30px; border-radius: 50%; background: #fa3a3a; color: #fff; font-weight: 400; font-size: 19px; line-height: 29px; text-align: center; }
.num1 { left: 831px; top: 447px; }
.num2 { left: 1771px; top: 168px; }
.num3 { left: 2121px; top: 220px; background: #f41cf4; }
.tip { padding: 9px 20px 9px 9px; border-radius: 3px; background: rgba(0, 0, 0, 0.6); color: #fff; font-size: 24px; line-height: 32px; white-space: nowrap; }
.tip span { font-size: 25px; }
.tip::before { content: ""; position: absolute; left: -7px; top: 18px; border: 7px solid transparent; border-left: 0; border-right-color: rgba(0, 0, 0, 0.6); }
.tip1 { left: 875px; top: 437px; }
.tip2 { left: 1815px; top: 158px; }
.tip3 { left: 2165px; top: 210px; }
</style>
